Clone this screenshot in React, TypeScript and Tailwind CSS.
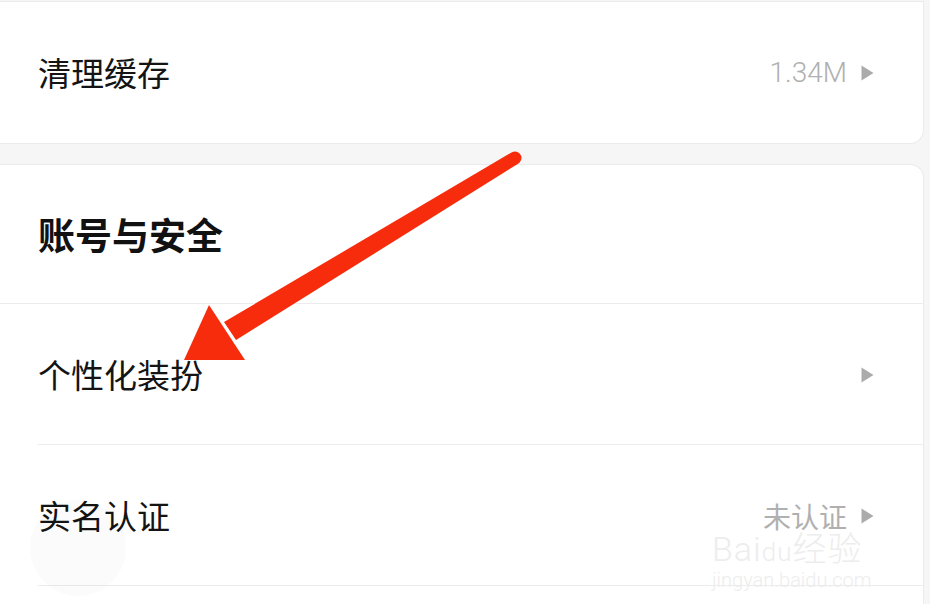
const cjk = { fontFamily: '"Noto Sans CJK SC", "Noto Sans", sans-serif' }
const latin = { fontFamily: 'Roboto, "Noto Sans", "Noto Sans CJK SC", sans-serif' }

function Caret() {
  return (
    <svg width="13" height="16" viewBox="0 0 13 16" className="shrink-0">
      <path d="M0.5 0.5 L12.5 8 L0.5 15.5 Z" fill="#ababab" />
    </svg>
  )
}

type Linha = {
  titulo: string
  valor?: string
  valorLatino?: boolean
  divisor?: boolean
}

function Row({ titulo, valor, valorLatino, divisor }: Linha) {
  return (
    <div className="h-[141px] flex items-center pl-[38px] pr-[49px] relative">
      <span className="flex-1 text-[33px] text-[#141414] leading-none" style={cjk}>
        {titulo}
      </span>
      {valor && (
        <span
          className={valorLatino ? 'text-[28px] font-light text-[#b0b0b0] mr-[14px] leading-none' : 'text-[28px] text-[#b0b0b0] mr-[14px] leading-none'}
          style={valorLatino ? latin : cjk}
        >
          {valor}
        </span>
      )}
      <Caret />
      {divisor && <div className="absolute left-[38px] right-0 bottom-0 h-px bg-[#ececec]" />}
    </div>
  )
}

export default function App() {
  return (
    <div className="w-[930px] h-[604px] bg-[#f6f6f6] overflow-hidden relative">
      <div className="mt-px mr-[6px] bg-white border-t border-r border-b border-[#ebebeb] rounded-br-[14px]">
        <Row titulo="清理缓存" valor="1.34M" valorLatino />
      </div>

      <div className="mt-[20px] mr-[6px] bg-white border-t border-r border-[#ebebeb] rounded-tr-[14px]">
        <div className="h-[139px] flex items-center pl-[38px] border-b border-[#ececec]">
          <span className="text-[37px] font-bold text-[#111] leading-none" style={cjk}>
            账号与安全
          </span>
        </div>
        <Row titulo="个性化装扮" divisor />
        <Row titulo="实名认证" valor="未认证" divisor />
        <div className="h-[40px]" />
      </div>

      {/* faint ghost circle */}
      <div className="absolute left-[30px] top-[500px] w-[96px] h-[96px] rounded-full bg-black/[0.015]" />

      {/* watermark */}
      <div className="absolute left-[712px] top-[532px] flex flex-col items-start pointer-events-none select-none">
        <span className="text-[34px] leading-none font-light text-[#ededed] tracking-[1px]" style={latin}>
          Bai<span className="text-[26px]">du</span>经验
        </span>
        <span className="mt-[4px] text-[20px] leading-none font-light text-[#ededed]" style={latin}>
          jingyan.baidu.com
        </span>
      </div>

      {/* red arrow */}
      <svg className="absolute left-0 top-0 pointer-events-none" width="930" height="604" viewBox="0 0 930 604">
        <path d="M518.4 163.6 L236 340 L224 322 L511.6 152.4 Z" fill="#f72c0c" />
        <circle cx="515" cy="158" r="6.5" fill="#f72c0c" />
        <path d="M209 305 L184 360 L245 360 Z" fill="#f72c0c" />
      </svg>
    </div>
  )
}
